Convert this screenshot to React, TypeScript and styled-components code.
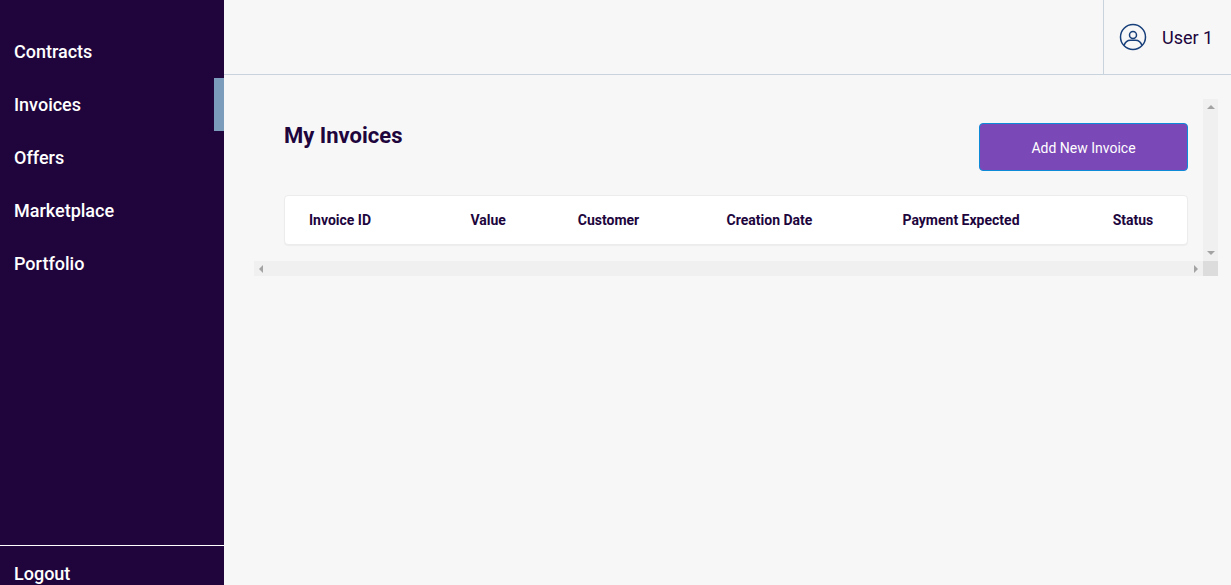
import React from 'react';
import styled, { createGlobalStyle } from 'styled-components';

const GlobalStyle = createGlobalStyle`
  *, *::before, *::after { box-sizing: border-box; }
  body {
    margin: 0;
    background: #f7f7f7;
    color: #20053d;
    font-family: Roboto, "Liberation Sans", sans-serif;
  }
`;

const Page = styled.div`
  display: flex;
  height: 100vh;
  overflow: hidden;
`;

const Sidebar = styled.aside`
  display: flex;
  flex: 0 0 224px;
  flex-direction: column;
  justify-content: space-between;
  background: #20053d;
`;

const Nav = styled.nav`
  display: flex;
  flex-direction: column;
  padding-top: 25px;
`;

const NavLink = styled.a<{ $active?: boolean }>`
  display: block;
  padding: 16px 4px 16px 14px;
  border-right: 10px solid ${(p) => (p.$active ? '#7b9cba' : 'transparent')};
  color: #fff;
  font-size: 18px;
  font-weight: 500;
  line-height: 21px;
  text-decoration: none;
`;

const SidebarFooter = styled.div`
  flex: 0 0 40px;
  padding-top: 1px;
  overflow: hidden;
  border-top: 1px solid #fff;
`;

const Content = styled.div`
  display: flex;
  flex: 1;
  flex-direction: column;
  min-width: 0;
`;

const Header = styled.header`
  display: flex;
  flex: 0 0 75px;
  justify-content: flex-end;
  border-bottom: 1px solid #c8d3de;
`;

const UserBox = styled.div`
  display: flex;
  align-items: center;
  gap: 15px;
  width: 128px;
  padding-left: 15px;
  border-left: 1px solid #c8d3de;
  font-size: 18px;
  line-height: 21px;
`;

const ScrollFrame = styled.main`
  display: grid;
  grid-template-columns: minmax(0, 1fr) 15px;
  grid-template-rows: auto 15px;
  margin: 24px 13px 0 30px;
`;

const Panel = styled.section`
  padding: 24px 15px 16px 30px;
`;

const TitleRow = styled.div`
  display: flex;
  justify-content: space-between;
  margin-bottom: 24px;
`;

const Title = styled.h1`
  margin: 0;
  font-size: 22px;
  font-weight: 700;
  line-height: 25px;
`;

const AddButton = styled.button`
  width: 209px;
  height: 48px;
  padding: 2px 0 0;
  border: 1px solid #0d8bd9;
  border-radius: 4px;
  background: #7b48b7;
  color: #fff;
  font-family: inherit;
  font-size: 14px;
`;

const TableCard = styled.div`
  border: 1px solid #ececec;
  border-radius: 4px;
  background: #fff;
  box-shadow: 0 1px 1px rgba(0, 0, 0, 0.04);
`;

const Table = styled.table`
  width: 100%;
  table-layout: fixed;
  border-collapse: collapse;
`;

const HeadCell = styled.th<{ $width?: string }>`
  width: ${(p) => p.$width ?? 'auto'};
  padding: 16px 0 16px 24px;
  font-size: 14px;
  font-weight: 700;
  line-height: 16px;
  text-align: left;
  white-space: nowrap;
`;

const ScrollTrack = styled.div<{ $vertical?: boolean }>`
  display: flex;
  flex-direction: ${(p) => (p.$vertical ? 'column' : 'row')};
  align-items: center;
  justify-content: space-between;
  padding: ${(p) => (p.$vertical ? '6px 0' : '0 5px')};
  background: #f0f0f0;
`;

const ScrollCorner = styled.div`
  background: #dcdcdc;
`;

const Arrow = styled.svg`
  display: block;
  fill: #a3a3a3;
`;

const UserIcon = () => (
  <svg width="28" height="28" viewBox="0 0 28 28" fill="none" stroke="#173f7a" strokeWidth="1.5" aria-hidden="true">
    <circle cx="14" cy="14" r="12.5" />
    <circle cx="14" cy="12" r="3.5" />
    <path d="M5 22.5C6.2 18.9 8.6 17.3 11.5 17.3h5c2.900 0 5.300 1.600 6.500 5.200" />
  </svg>
);

const navItems = ['Contracts', 'Invoices', 'Offers', 'Marketplace', 'Portfolio'];

const columns = [
  { label: 'Invoice ID', width: '17.9%' },
  { label: 'Value', width: '11.9%' },
  { label: 'Customer', width: '16.5%' },
  { label: 'Creation Date', width: '19.5%' },
  { label: 'Payment Expected', width: '23.3%' },
  { label: 'Status' },
];

export default function App() {
  return (
    <>
      <GlobalStyle />
      <Page>
        <Sidebar>
          <Nav>
            {navItems.map((item) => (
              <NavLink
                key={item}
                href={`#${item.toLowerCase()}`}
                $active={item === 'Invoices'}
                aria-current={item === 'Invoices' ? 'page' : undefined}
              >
                {item}
              </NavLink>
            ))}
          </Nav>
          <SidebarFooter>
            <NavLink href="#logout">Logout</NavLink>
          </SidebarFooter>
        </Sidebar>
        <Content>
          <Header>
            <UserBox>
              <UserIcon />
              <span>User 1</span>
            </UserBox>
          </Header>
          <ScrollFrame>
            <Panel>
              <TitleRow>
                <Title>My Invoices</Title>
                <AddButton type="button">Add New Invoice</AddButton>
              </TitleRow>
              <TableCard>
                <Table>
                  <thead>
                    <tr>
                      {columns.map((c) => (
                        <HeadCell key={c.label} scope="col" $width={c.width}>
                          {c.label}
                        </HeadCell>
                      ))}
                    </tr>
                  </thead>
                </Table>
              </TableCard>
            </Panel>
            <ScrollTrack $vertical aria-hidden="true">
              <Arrow width="8" height="4" viewBox="0 0 8 4"><path d="M0 4L4 0L8 4z" /></Arrow>
              <Arrow width="8" height="4" viewBox="0 0 8 4"><path d="M0 0L4 4L8 0z" /></Arrow>
            </ScrollTrack>
            <ScrollTrack aria-hidden="true">
              <Arrow width="4" height="8" viewBox="0 0 4 8"><path d="M4 0L0 4L4 8z" /></Arrow>
              <Arrow width="4" height="8" viewBox="0 0 4 8"><path d="M0 0L4 4L0 8z" /></Arrow>
            </ScrollTrack>
            <ScrollCorner />
          </ScrollFrame>
        </Content>
      </Page>
    </>
  );
}
